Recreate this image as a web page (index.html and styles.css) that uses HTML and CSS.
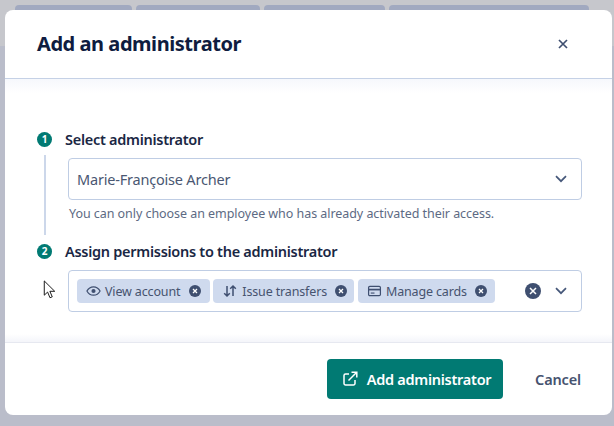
FILE: index.html
```html
<!DOCTYPE html>
<html lang="en">
<head>
<meta charset="utf-8">
<title>Add an administrator</title>
<link rel="stylesheet" href="styles.css">
</head>
<body>
<div class="backdrop">
  <div class="tabs">
    <span class="tab tab-a"></span>
    <span class="tab tab-b"></span>
    <span class="tab tab-c"></span>
    <span class="tab tab-d"></span>
  </div>
</div>
<section class="modal">
  <header class="modal-head">
    <h1>Add an administrator</h1>
    <svg class="close" viewBox="0 0 10 10" width="10" height="10"><path d="M1 1l8 8M9 1l-8 8" fill="none" stroke="#3f4f70" stroke-width="1.700"/></svg>
  </header>
  <div class="modal-body">
    <div class="step step-one">
      <div class="rail">
        <span class="num">1</span>
        <span class="line"></span>
      </div>
      <div class="content">
        <h2>Select administrator</h2>
        <div class="field field-single">
          <span class="value">Marie-Françoise Archer</span>
          <svg class="chev" viewBox="0 0 12 8" width="12" height="8"><path d="M1 1.200l5 5 5-5" fill="none" stroke="#46587a" stroke-width="1.700"/></svg>
        </div>
        <p class="hint">You can only choose an employee who has already activated their access.</p>
      </div>
    </div>
    <div class="step">
      <div class="rail"><span class="num">2</span></div>
      <div class="content">
        <h2>Assign permissions to the administrator</h2>
        <div class="field field-multi">
          <span class="chip chip-view">
            <svg viewBox="0 0 16 16" width="15" height="16"><path d="M1 8c1.600-3 4-4.500 7-4.500S13.400 5 15 8c-1.600 3-4 4.500-7 4.500S2.600 11 1 8z" fill="none" stroke="#3f4f70" stroke-width="1.300"/><circle cx="8" cy="8" r="2.200" fill="#3f4f70"/></svg>
            <span>View account</span>
            <span class="x-dot"><svg viewBox="0 0 6 6" width="6" height="6"><path d="M1 1l4 4M5 1L1 5" stroke="#fff" stroke-width="1.300"/></svg></span>
          </span>
          <span class="chip chip-transfers">
            <svg viewBox="0 0 16 16" width="16" height="16"><path d="M5 3v10M2.200 10.200L5 13l2.800-2.800M11 13V3M8.200 5.800L11 3l2.800 2.800" fill="none" stroke="#3f4f70" stroke-width="1.500"/></svg>
            <span>Issue transfers</span>
            <span class="x-dot"><svg viewBox="0 0 6 6" width="6" height="6"><path d="M1 1l4 4M5 1L1 5" stroke="#fff" stroke-width="1.300"/></svg></span>
          </span>
          <span class="chip chip-cards">
            <svg viewBox="0 0 16 16" width="15" height="16"><rect x="1.700" y="3" width="12.600" height="10" rx="1.300" fill="none" stroke="#3f4f70" stroke-width="1.300"/><path d="M2 6.500h12" stroke="#3f4f70" stroke-width="1.800"/><path d="M4 10.200h4" stroke="#3f4f70" stroke-width="1.200"/></svg>
            <span>Manage cards</span>
            <span class="x-dot"><svg viewBox="0 0 6 6" width="6" height="6"><path d="M1 1l4 4M5 1L1 5" stroke="#fff" stroke-width="1.300"/></svg></span>
          </span>
          <span class="clear"><svg viewBox="0 0 8 8" width="8" height="8"><path d="M1 1l6 6M7 1L1 7" stroke="#fff" stroke-width="1.500"/></svg></span>
          <svg class="chev chev-multi" viewBox="0 0 12 8" width="12" height="8"><path d="M1 1.200l5 5 5-5" fill="none" stroke="#46587a" stroke-width="1.700"/></svg>
        </div>
      </div>
    </div>
  </div>
  <footer class="modal-foot">
    <button class="primary" type="button">
      <svg viewBox="0 0 16 16" width="16" height="16"><path d="M7 3H3.500A1.500 1.500 0 0 0 2 4.500v8A1.500 1.500 0 0 0 3.500 14h8a1.500 1.500 0 0 0 1.500-1.500V9M6.500 9.500L14.500 1.500M9.500 1.200h5.300v5.300" fill="none" stroke="#fff" stroke-width="1.500"/></svg>
      <span>Add administrator</span>
    </button>
    <button class="ghost" type="button">Cancel</button>
  </footer>
</section>
<svg class="cursor" viewBox="0 0 13 20" width="13" height="19"><path d="M1 1v15l3.500-3.300 2.500 6 2.400-1-2.500-5.800H12z" fill="#fff" stroke="#111" stroke-width="1"/></svg>
</body>
</html>
```

FILE: styles.css
```css
* { box-sizing: border-box; }
html, body { margin: 0; height: 100%; }
body {
  width: 614px;
  height: 426px;
  overflow: hidden;
  position: relative;
  background: #babdca;
  font-family: "Noto Sans", "Open Sans", sans-serif;
  color: #0f1c3f;
}
.backdrop {
  height: 46px;
  background: #c6c7cc;
  padding-top: 5px;
  padding-left: 15px;
}
.tabs { display: flex; gap: 4px; height: 30px; }
.tab { background: #a1a9c0; border-radius: 4px 4px 0 0; height: 30px; }
.tab-a { width: 117px; }
.tab-b { width: 124px; }
.tab-c { width: 121px; }
.tab-d { width: 200px; }

.modal {
  position: absolute;
  left: 5px;
  top: 10px;
  width: 607px;
  height: 405px;
  background: #fff;
  border-radius: 8px;
  display: flex;
  flex-direction: column;
}
.modal-head {
  height: 69px;
  flex: none;
  display: flex;
  align-items: center;
  justify-content: space-between;
  padding: 0 44px 0 32px;
  border-bottom: 1px solid #c5d1e6;
}
h1 {
  margin: 0;
  font-size: 20px;
  line-height: 28px;
  font-weight: 700;
  color: #0f1c3f;
  letter-spacing: -0.45px;
}
.close { display: block; }
.modal-body {
  flex: 1;
  background: linear-gradient(#f6f8fc, #fff 14px, #fff calc(100% - 8px), #f4f5fa);
  padding: 50px 30px 0 32px;
  border-bottom: 1px solid #e6e8f0;
}
.step { display: flex; gap: 13px; align-items: stretch; }
.step-one { height: 112px; }
.rail {
  width: 15px;
  flex: none;
  display: flex;
  flex-direction: column;
  align-items: center;
}
.num {
  width: 15px;
  height: 15px;
  flex: none;
  margin-top: 3px;
  border-radius: 50%;
  background: #017a73;
  color: #fff;
  font-size: 10px;
  font-weight: 700;
  line-height: 15px;
  text-align: center;
}
.line {
  width: 2px;
  flex: 1;
  margin: 8px 0 6px 1px;
  background: #ccd7ea;
}
.content { flex: 1; min-width: 0; }
h2 {
  margin: 0 0 9px;
  font-size: 14.500px;
  line-height: 20px;
  font-weight: 600;
  color: #1a2744;
  letter-spacing: -0.28px;
}
.field {
  margin-left: 3px;
  background: #fff;
  border: 1px solid #bfcde4;
  border-radius: 4px;
  display: flex;
  align-items: center;
}
.field-single {
  height: 42px;
  padding: 0 14px 0 8px;
  justify-content: space-between;
}
.value {
  font-size: 14.500px;
  color: #4a5772;
  letter-spacing: -0.2px;
}
.chev { display: block; flex: none; }
.hint {
  margin: 5px 0 0 4px;
  font-size: 12.500px;
  line-height: 17px;
  color: #5d6a83;
  letter-spacing: -0.05px;
  white-space: nowrap;
}
.field-multi {
  height: 42px;
  padding: 0 14px 0 8px;
  gap: 3px;
}
.chip {
  height: 24px;
  display: inline-flex;
  align-items: center;
  gap: 4px;
  padding: 0 8px 0 9px;
  background: #cfdaee;
  border-radius: 4px;
  font-size: 12.500px;
  color: #46536f;
  letter-spacing: -0.15px;
  white-space: nowrap;
}
.chip-view { padding-right: 9px; }
.chip-view .x-dot { margin-left: 5px; }
.chip-transfers { padding-right: 7px; }
.chip-cards { margin-left: 1px; }
.chip svg { display: block; flex: none; }
.x-dot {
  width: 12px;
  height: 12px;
  margin-left: 4px;
  border-radius: 50%;
  background: #3f4f70;
  display: flex;
  align-items: center;
  justify-content: center;
}
.clear {
  width: 16px;
  height: 16px;
  margin-left: auto;
  border-radius: 50%;
  background: #3f4f70;
  display: flex;
  align-items: center;
  justify-content: center;
}
.chev-multi { margin-left: 11px; }
.modal-foot {
  height: 72px;
  flex: none;
  display: flex;
  align-items: center;
  justify-content: flex-end;
  padding: 0 31px 0 0;
  gap: 32px;
}
button { font-family: inherit; border: 0; cursor: pointer; }
.primary {
  width: 176px;
  height: 40px;
  padding: 0 0 0 3px;
  background: #017a73;
  color: #fff;
  border-radius: 4px;
  font-size: 14.500px;
  font-weight: 600;
  letter-spacing: -0.27px;
  display: flex;
  align-items: center;
  justify-content: center;
  gap: 9px;
}
.primary svg { display: block; }
.ghost {
  padding: 0;
  background: none;
  color: #46536f;
  font-size: 14.500px;
  font-weight: 600;
  letter-spacing: -0.15px;
}
.cursor {
  position: absolute;
  left: 43px;
  top: 280px;
}
```
